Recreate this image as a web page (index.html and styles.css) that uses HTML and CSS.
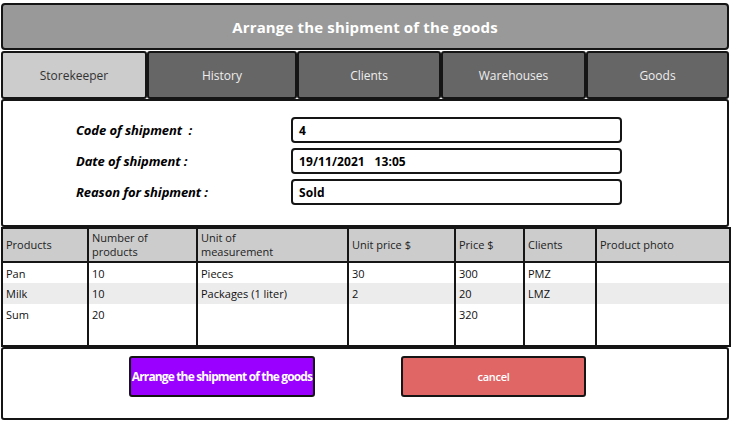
FILE: index.html
```html
<!DOCTYPE html>
<html lang="en">
<head>
<meta charset="utf-8">
<title>Arrange the shipment of the goods</title>
<link rel="stylesheet" href="styles.css">
</head>
<body>
<div class="app">
  <header class="title">Arrange the shipment of the goods</header>
  <nav class="tabs">
    <div class="tab active">Storekeeper</div>
    <div class="tab">History</div>
    <div class="tab">Clients</div>
    <div class="tab">Warehouses</div>
    <div class="tab">Goods</div>
  </nav>
  <section class="form">
    <div class="label">Code of shipment&nbsp; :</div>
    <div class="field">4</div>
    <div class="label">Date of shipment :</div>
    <div class="field">19/11/2021&nbsp;&nbsp; 13:05</div>
    <div class="label">Reason for shipment :</div>
    <div class="field">Sold</div>
  </section>
  <table class="grid">
    <colgroup>
      <col class="c1"><col class="c2"><col class="c3"><col class="c4"><col class="c5"><col class="c6"><col class="c7">
    </colgroup>
    <thead>
      <tr>
        <th>Products</th>
        <th>Number of<br>products</th>
        <th>Unit of<br>measurement</th>
        <th>Unit price $</th>
        <th>Price $</th>
        <th>Clients</th>
        <th>Product photo</th>
      </tr>
    </thead>
    <tbody>
      <tr><td>Pan</td><td>10</td><td>Pieces</td><td>30</td><td>300</td><td>PMZ</td><td></td></tr>
      <tr class="alt"><td>Milk</td><td>10</td><td>Packages (1 liter)</td><td>2</td><td>20</td><td>LMZ</td><td></td></tr>
      <tr><td>Sum</td><td>20</td><td></td><td></td><td>320</td><td></td><td></td></tr>
      <tr><td></td><td></td><td></td><td></td><td></td><td></td><td></td></tr>
    </tbody>
  </table>
  <section class="actions">
    <button class="btn primary">Arrange the shipment of the goods</button>
    <button class="btn cancel">cancel</button>
  </section>
</div>
</body>
</html>
```
FILE: styles.css
```css
* { box-sizing: border-box; }
html, body { margin: 0; padding: 0; background: #fff; }
body { font-family: "Open Sans", "Noto Sans", sans-serif; color: #000; }

.app {
  width: 729px;
  padding: 3px 0 0 1px;
}

.title {
  height: 47px;
  background: #999;
  border: 2px solid #151515;
  border-radius: 4px;
  display: flex;
  align-items: center;
  justify-content: center;
  color: #fff;
  font-weight: 700;
  font-size: 15px;
  letter-spacing: 0.15px;
}

.tabs {
  margin-top: 1px;
  height: 48px;
  display: grid;
  grid-template-columns: 146px 150px 144px 145px 143px;
}
.tab {
  background: #666;
  border: 2px solid #151515;
  border-radius: 3px;
  color: #eee;
  font-size: 12px;
  display: flex;
  align-items: center;
  justify-content: center;
  padding-top: 1px;
}
.tab.active {
  background: #ccc;
  color: #333;
}

.form {
  height: 128px;
  border: 2px solid #151515;
  border-radius: 3px;
  padding: 16px 0 0 73px;
  display: grid;
  grid-template-columns: 215px 331px;
  grid-auto-rows: 26px;
  row-gap: 5px;
  align-items: center;
}
.label {
  font-weight: 700;
  font-style: italic;
  font-size: 13px;
  letter-spacing: -0.1px;
  color: #000;
}
.field {
  height: 26px;
  border: 2px solid #151515;
  border-radius: 4px;
  padding: 0 0 0 6px;
  display: flex;
  align-items: center;
  font-weight: 700;
  font-size: 12px;
  letter-spacing: 0.1px;
}

.grid {
  width: 728px;
  border-collapse: collapse;
  table-layout: fixed;
  font-size: 11px;
  border: 2px solid #151515;
}
.c1 { width: 86px; }
.c2 { width: 109px; }
.c3 { width: 151px; }
.c4 { width: 107px; }
.c5 { width: 69px; }
.c6 { width: 72px; }
.c7 { width: 134px; }

.grid th {
  background: #ccc;
  height: 34px;
  font-weight: 400;
  text-align: left;
  vertical-align: middle;
  line-height: 14px;
  padding: 0 0 0 3px;
  border: 2px solid #151515;
  color: #222;
}
.grid td {
  height: 21px;
  padding: 0 0 0 3px;
  border-left: 2px solid #151515;
  border-right: 2px solid #151515;
  vertical-align: middle;
  color: #111;
}
.grid tr.alt td { background: #ececec; }

.actions {
  height: 73px;
  border: 2px solid #151515;
  border-radius: 3px;
  padding: 7px 0 0 126px;
  display: flex;
  align-items: flex-start;
  gap: 86px;
}
.btn {
  height: 41px;
  border: 2px solid #151515;
  border-radius: 3px;
  color: #fff;
  font-family: "Open Sans", "Noto Sans", sans-serif;
  font-weight: 700;
  font-size: 12px;
  padding: 0;
  white-space: nowrap;
  display: flex;
  align-items: center;
  justify-content: center;
}
.btn.primary {
  width: 186px;
  background: #9900ff;
  letter-spacing: -0.85px;
  overflow: visible;
}
.btn.cancel {
  width: 185px;
  background: #e06666;
  font-size: 11px;
  font-weight: 600;
  letter-spacing: -0.3px;
}
```
